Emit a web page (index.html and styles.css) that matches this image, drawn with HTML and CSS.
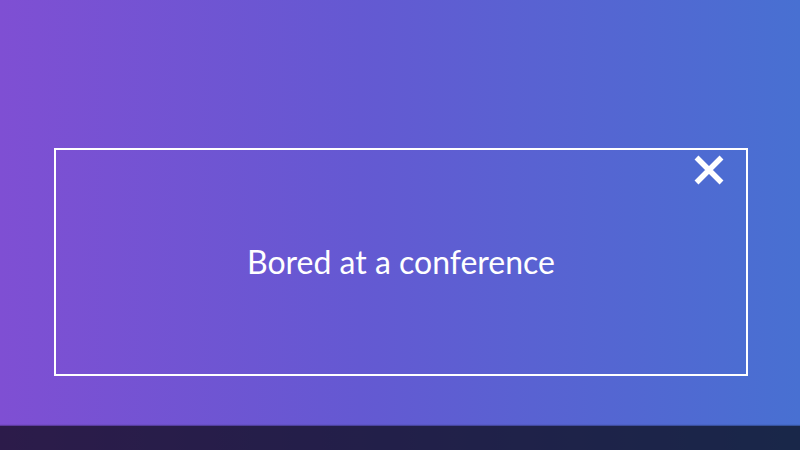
FILE: index.html
```html
<!DOCTYPE html>
<html>
<head>
<meta charset="utf-8">
<link rel="stylesheet" href="styles.css">
</head>
<body>
<div class="page">
  <main class="stage">
    <section class="card">
      <button class="close" aria-label="Close">
        <svg width="30" height="30" viewBox="0 0 30 30"><path d="M2.5 2.5 L27.5 27.5 M27.5 2.5 L2.5 27.5" stroke="#fff" stroke-width="5.5" stroke-linecap="butt"/></svg>
      </button>
      <h1 class="title">Bored at a conference</h1>
    </section>
  </main>
  <footer class="bar"></footer>
</div>
</body>
</html>
```
FILE: styles.css
```css
html, body {
  margin: 0;
  padding: 0;
}
.page {
  width: 800px;
  height: 450px;
  background: linear-gradient(90deg, #7f4fd3 0%, #6459d2 45%, #4870d2 100%);
  display: flex;
  flex-direction: column;
  font-family: Lato, "Open Sans", sans-serif;
}
.stage {
  flex: 1;
  padding: 148px 52px 0 54px;
  box-sizing: border-box;
}
.card {
  position: relative;
  height: 228px;
  border: 2px solid #fff;
  box-sizing: border-box;
  display: flex;
  align-items: center;
  justify-content: center;
}
.title {
  margin: 0;
  color: #fff;
  font-weight: 400;
  font-size: 32px;
  letter-spacing: 0;
  padding-bottom: 2px;
}
.close {
  position: absolute;
  top: 5px;
  right: 22px;
  background: none;
  border: 0;
  padding: 0;
  width: 30px;
  height: 30px;
}
.close svg { display: block; }
.bar {
  height: 24px;
  background: rgba(0, 0, 0, 0.65);
  box-shadow: 0 -1px 1px rgba(0,0,0,0.25);
}
```
